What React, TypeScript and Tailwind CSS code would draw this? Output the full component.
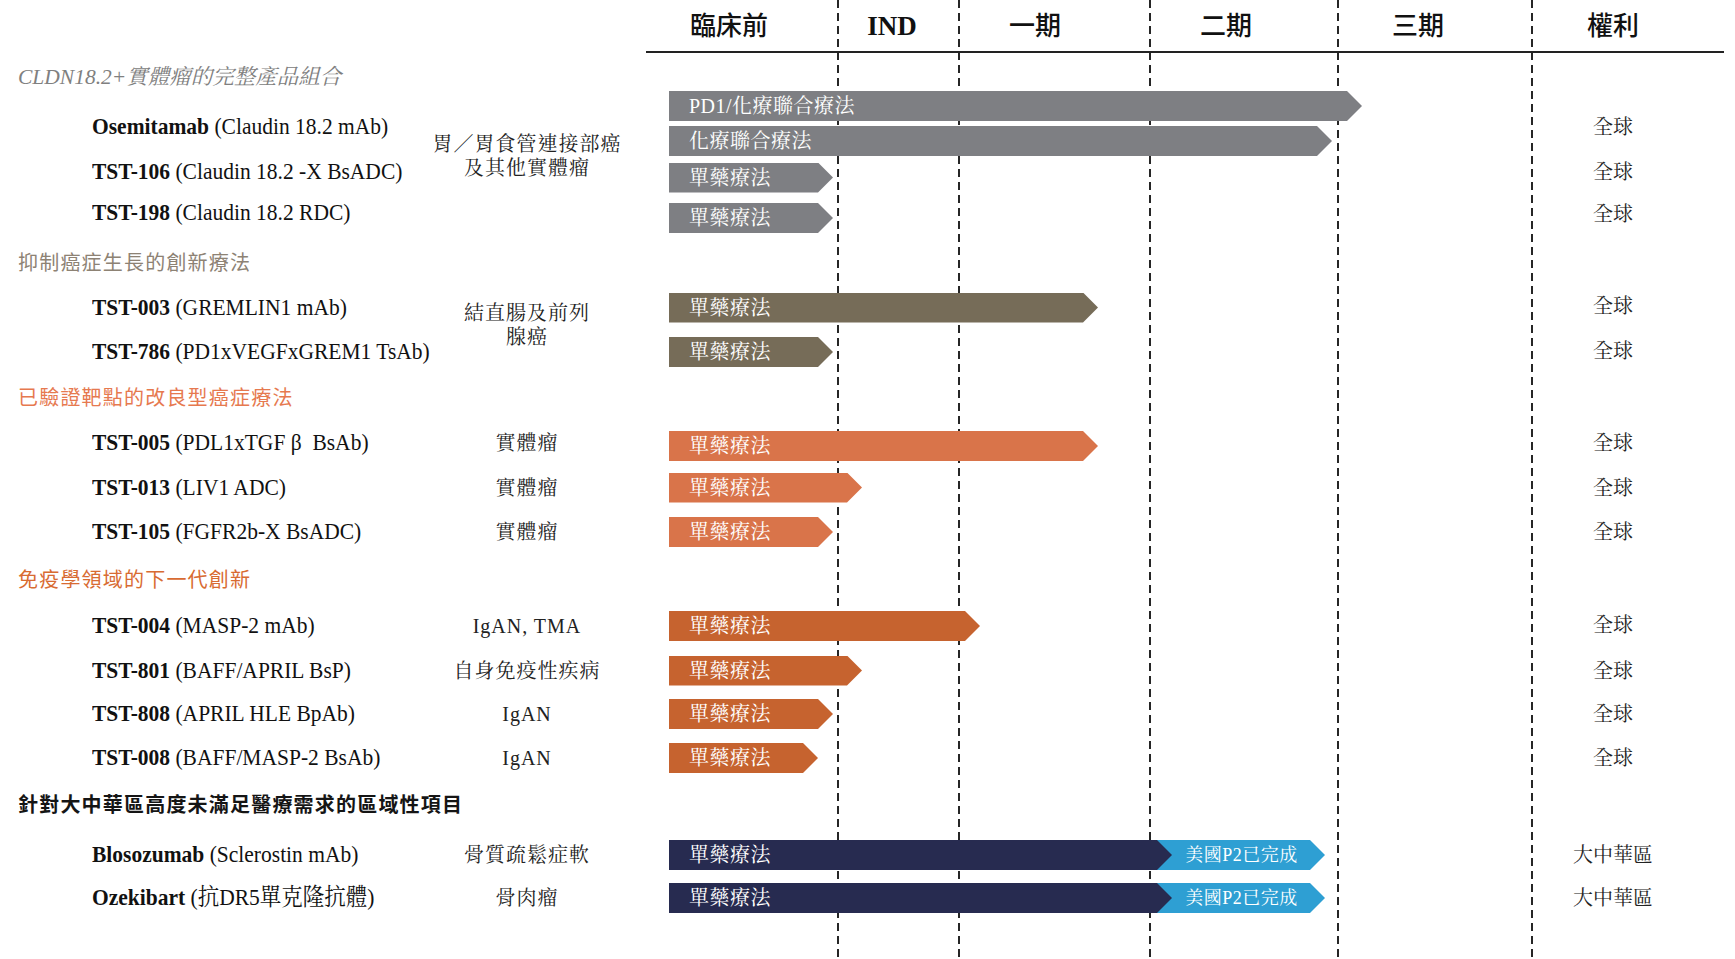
import React from "react";

const SERIF = "font-['Liberation_Serif','Noto_Serif_CJK_TC','Noto_Sans_CJK_TC',serif]";
const SANS = "font-['Noto_Sans_CJK_TC','Noto_Sans',sans-serif]";
const ARROW =
  "[clip-path:polygon(0_0,calc(100%_-_15px)_0,100%_50%,calc(100%_-_15px)_100%,0_100%)]";

const GRAY = "bg-[#7e7f83]";
const OLIVE = "bg-[#766c58]";
const ORANGE = "bg-[#d9744a]";
const RUST = "bg-[#c6632f]";
const NAVY = "bg-[#272b50]";
const BLUE = "bg-[#2e9fd3]";

function Bar({ w, color, label }: { w: number; color: string; label: string }) {
  return (
    <div
      className={`h-[30px] shrink-0 flex items-center pl-[20px] text-white text-[20px] leading-none tracking-[0.5px] whitespace-nowrap ${SERIF} ${ARROW} ${color}`}
      style={{ width: w }}
    >
      {label}
    </div>
  );
}

function Name({ b, r, cls = "" }: { b: string; r: string; cls?: string }) {
  return (
    <div
      className={`col-start-1 flex items-center pl-[92px] text-[21.5px] leading-none text-[#111] whitespace-pre ${SERIF} ${cls}`}
    >
      <span className="inline-block scale-y-[1.1]">
        <span className="font-bold">{b}</span>
        <span>{" " + r}</span>
      </span>
    </div>
  );
}

function Rights({ t, cls = "" }: { t: string; cls?: string }) {
  return (
    <div
      className={`col-start-4 flex items-center justify-center text-[20px] leading-none text-[#222] ${SERIF} ${cls}`}
    >
      {t}
    </div>
  );
}

function Chart({ children, cls = "" }: { children: React.ReactNode; cls?: string }) {
  return <div className={`col-start-3 flex items-center pl-[35px] ${cls}`}>{children}</div>;
}

function Ind({ children, cls = "" }: { children: React.ReactNode; cls?: string }) {
  return (
    <div
      className={`col-start-2 flex items-center justify-center text-center text-[20px] leading-[24px] tracking-[1px] text-[#222] whitespace-nowrap ${SERIF} ${cls}`}
    >
      {children}
    </div>
  );
}

function Split() {
  return (
    <div className="flex items-center">
      <div className="relative z-10">
        <Bar w={503} color={NAVY} label="單藥療法" />
      </div>
      <div
        className={`h-[30px] w-[173px] -ml-[20px] flex items-center justify-center pl-[20px] pr-[14px] text-white text-[18px] leading-none tracking-[0.5px] whitespace-nowrap ${SERIF} ${ARROW} ${BLUE}`}
      >
        美國P2已完成
      </div>
    </div>
  );
}

const LINE =
  "absolute top-0 h-full w-[2px] [background-image:repeating-linear-gradient(to_bottom,#262626_0px,#262626_8px,transparent_8px,transparent_13px)]";

export default function App() {
  return (
    <div className="relative isolate w-[1735px] h-[959px] overflow-hidden bg-white">
      {/* dashed stage lines (behind bars) */}
      <div className="absolute inset-0 -z-10">
        <div className={`${LINE} left-[837px]`} />
        <div className={`${LINE} left-[958px]`} />
        <div className={`${LINE} left-[1149px]`} />
        <div className={`${LINE} left-[1337px]`} />
        <div className={`${LINE} left-[1531px]`} />
      </div>

      {/* header */}
      <div className="flex h-[53px] ml-[646px] w-[1078px] border-b-2 border-[#222] text-[#111]">
        <div className={`w-[192px] flex items-center justify-center pr-[26px] pb-[5px] text-[26px] font-medium ${SANS}`}>臨床前</div>
        <div className={`w-[121px] flex items-center justify-center pr-[13px] pt-[2px] text-[27px] font-bold ${SERIF}`}>IND</div>
        <div className={`w-[191px] flex items-center justify-center pr-[39px] pb-[5px] text-[26px] font-medium ${SANS}`}>一期</div>
        <div className={`w-[188px] flex items-center justify-center pr-[36px] pb-[5px] text-[26px] font-medium ${SANS}`}>二期</div>
        <div className={`w-[194px] flex items-center justify-center pr-[34px] pb-[5px] text-[26px] font-medium ${SANS}`}>三期</div>
        <div className={`flex-1 flex items-center justify-center pr-[30px] pb-[5px] text-[26px] font-medium ${SANS}`}>權利</div>
      </div>

      {/* section 1 */}
      <div className={`h-[38px] flex items-center pt-[12px] pl-[18px] italic text-[21.5px] leading-none text-[#808080] ${SERIF}`}>
        CLDN18.2+實體瘤的完整產品組合
      </div>
      <div className="grid grid-cols-[420px_214px_898px_162px] grid-rows-[67px_39px_42px]">
        <Name b="Osemitamab" r="(Claudin 18.2 mAb)" cls="pt-[5px]" />
        <Ind cls="row-span-3 pb-[18px]">
          胃／胃食管連接部癌
          <br />
          及其他實體瘤
        </Ind>
        <Chart cls="flex-col !items-start justify-start gap-[5px]">
          <Bar w={693} color={GRAY} label="PD1/化療聯合療法" />
          <Bar w={663} color={GRAY} label="化療聯合療法" />
        </Chart>
        <Rights t="全球" cls="pt-[5px]" />

        <Name b="TST-106" r="(Claudin 18.2 -X BsADC)" cls="pb-[11px]" />
        <Chart>
          <Bar w={164} color={GRAY} label="單藥療法" />
        </Chart>
        <Rights t="全球" cls="pb-[11px]" />

        <Name b="TST-198" r="(Claudin 18.2 RDC)" cls="pb-[10px]" />
        <Chart>
          <Bar w={164} color={GRAY} label="單藥療法" />
        </Chart>
        <Rights t="全球" cls="pb-[8px]" />
      </div>

      {/* section 2 */}
      <div className={`h-[46px] flex items-center pl-[18px] text-[20px] leading-none tracking-[1.2px] text-[#8d8274] ${SANS}`}>
        抑制癌症生長的創新療法
      </div>
      <div className="grid grid-cols-[420px_214px_898px_162px] grid-rows-[45px_44px]">
        <Name b="TST-003" r="(GREMLIN1 mAb)" />
        <Ind cls="row-span-2 pb-[9px]">
          結直腸及前列
          <br />
          腺癌
        </Ind>
        <Chart>
          <Bar w={429} color={OLIVE} label="單藥療法" />
        </Chart>
        <Rights t="全球" cls="pb-[4px]" />

        <Name b="TST-786" r="(PD1xVEGFxGREM1 TsAb)" />
        <Chart>
          <Bar w={164} color={OLIVE} label="單藥療法" />
        </Chart>
        <Rights t="全球" cls="pb-[2px]" />
      </div>

      {/* section 3 */}
      <div className={`h-[46px] flex items-center pl-[18px] text-[20px] leading-none tracking-[1.2px] text-[#e6794f] ${SANS}`}>
        已驗證靶點的改良型癌症療法
      </div>
      <div className="grid grid-cols-[420px_214px_898px_162px] grid-rows-[46px_43px_46px]">
        <Name b="TST-005" r="(PDL1xTGF β  BsAb)" />
        <Ind>實體瘤</Ind>
        <Chart cls="pt-[6px]">
          <Bar w={429} color={ORANGE} label="單藥療法" />
        </Chart>
        <Rights t="全球" />

        <Name b="TST-013" r="(LIV1 ADC)" />
        <Ind>實體瘤</Ind>
        <Chart>
          <Bar w={193} color={ORANGE} label="單藥療法" />
        </Chart>
        <Rights t="全球" />

        <Name b="TST-105" r="(FGFR2b-X BsADC)" />
        <Ind>實體瘤</Ind>
        <Chart>
          <Bar w={164} color={ORANGE} label="單藥療法" />
        </Chart>
        <Rights t="全球" />
      </div>

      {/* section 4 */}
      <div className={`h-[48px] flex items-center pl-[18px] text-[20px] leading-none tracking-[1.2px] text-[#d86b32] ${SANS}`}>
        免疫學領域的下一代創新
      </div>
      <div className="grid grid-cols-[420px_214px_898px_162px] grid-rows-[46px_43px_44px_44px]">
        <Name b="TST-004" r="(MASP-2 mAb)" />
        <Ind>IgAN, TMA</Ind>
        <Chart>
          <Bar w={311} color={RUST} label="單藥療法" />
        </Chart>
        <Rights t="全球" cls="pb-[3px]" />

        <Name b="TST-801" r="(BAFF/APRIL BsP)" />
        <Ind>自身免疫性疾病</Ind>
        <Chart>
          <Bar w={193} color={RUST} label="單藥療法" />
        </Chart>
        <Rights t="全球" />

        <Name b="TST-808" r="(APRIL HLE BpAb)" />
        <Ind>IgAN</Ind>
        <Chart>
          <Bar w={164} color={RUST} label="單藥療法" />
        </Chart>
        <Rights t="全球" />

        <Name b="TST-008" r="(BAFF/MASP-2 BsAb)" />
        <Ind>IgAN</Ind>
        <Chart>
          <Bar w={149} color={RUST} label="單藥療法" />
        </Chart>
        <Rights t="全球" />
      </div>

      {/* section 5 */}
      <div className={`h-[48px] flex items-center pl-[18px] text-[20px] leading-none tracking-[1.2px] font-bold text-[#151515] ${SANS}`}>
        針對大中華區高度未滿足醫療需求的區域性項目
      </div>
      <div className="grid grid-cols-[420px_214px_898px_162px] grid-rows-[54px_32px]">
        <Name b="Blosozumab" r="(Sclerostin mAb)" />
        <Ind>骨質疏鬆症軟</Ind>
        <Chart>
          <Split />
        </Chart>
        <Rights t="大中華區" />

        <Name b="Ozekibart" r="(抗DR5單克隆抗體)" />
        <Ind>骨肉瘤</Ind>
        <Chart>
          <Split />
        </Chart>
        <Rights t="大中華區" />
      </div>
    </div>
  );
}
